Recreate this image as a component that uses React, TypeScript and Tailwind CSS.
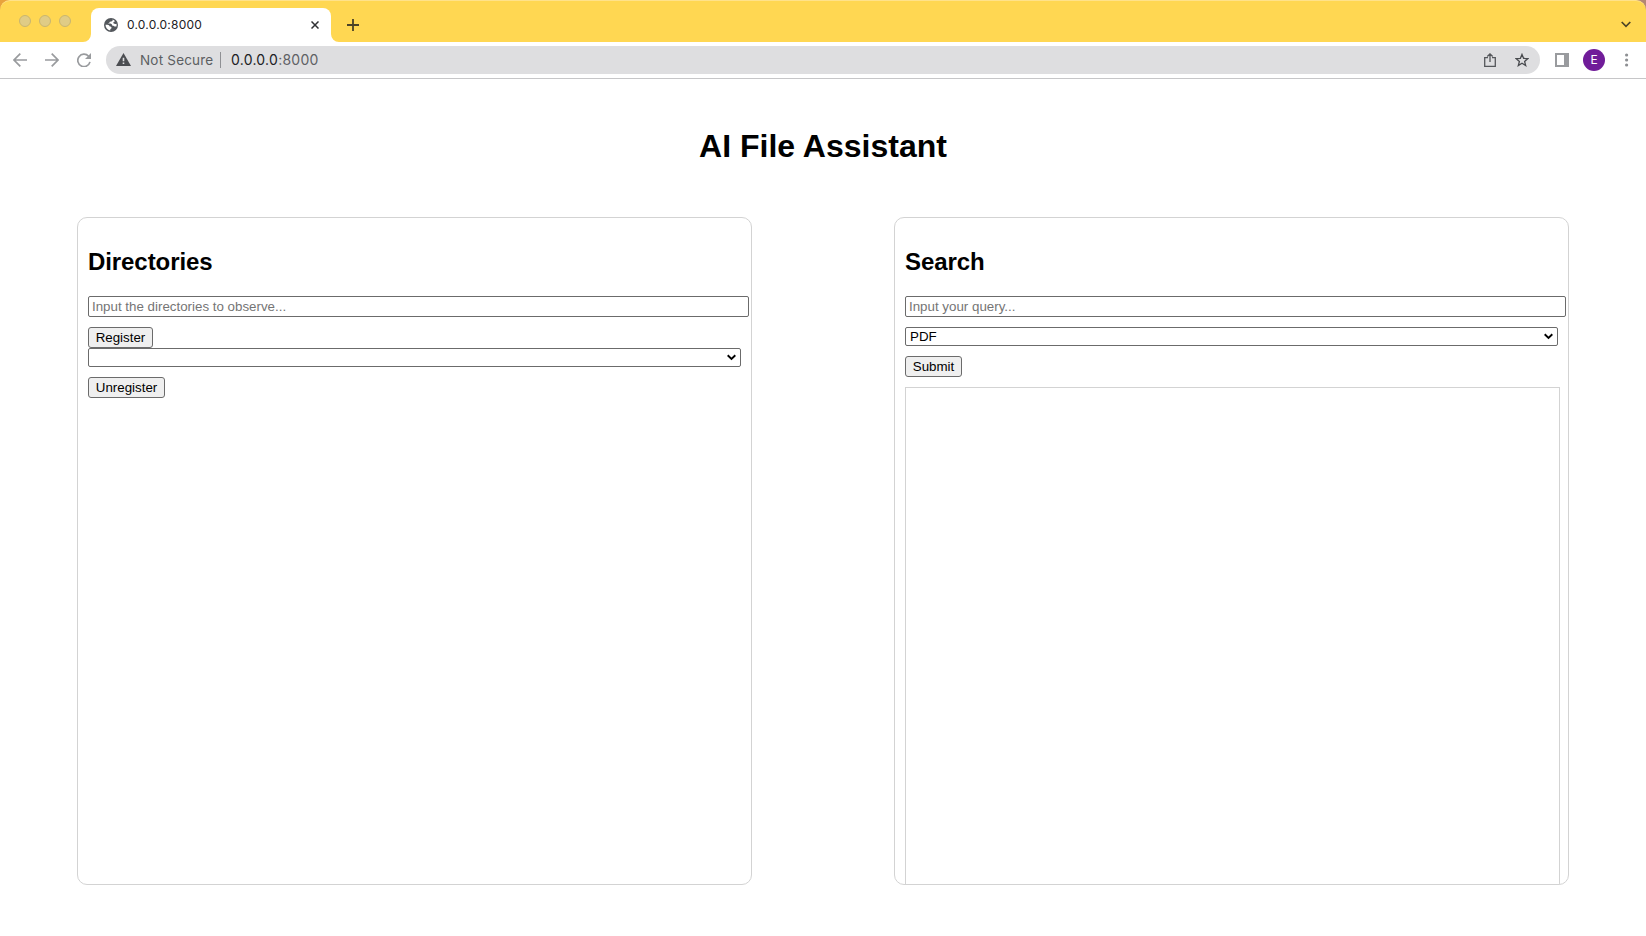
import React from "react";

const field = "h-[21px] w-[661px] shrink-0 rounded-[2px] border border-[#6b6b6b] bg-white px-[3px] text-[13.333px] leading-[15px] text-black outline-none placeholder:text-[#757575]";
const button = "flex h-[21px] shrink-0 items-center justify-center rounded-[3px] border border-[#6b6b6b] bg-[#efefef] text-[13.333px] leading-[15px] text-black";

function Dropdown({ label }: { label: string }) {
  return (
    <button className="flex h-[19px] w-full shrink-0 items-center justify-between rounded-[2px] border border-[#6b6b6b] bg-white pl-1 pr-1 text-[13.333px] leading-[15px] text-black">
      <span>{label}</span>
      <svg className="h-[7px] w-[9px]" viewBox="0 0 9 7" fill="none" stroke="#000" strokeWidth="1.9">
        <path d="M.7 1.3 4.5 5 8.3 1.3" />
      </svg>
    </button>
  );
}

function TabStrip() {
  return (
    <div className="flex h-[42px] bg-linear-to-r from-[#e8a33c] from-50% to-[#b38773] to-50%">
      <div className="flex w-full items-start rounded-t-[10px] border-t border-[#ffe28a] bg-[#ffd752]">
        <div className="flex w-[83px] gap-2 pl-[19px] pt-[14px]">
          <span className="size-3 rounded-full border border-[#c9b66f] bg-[#e0cc86]" />
          <span className="size-3 rounded-full border border-[#c9b66f] bg-[#e0cc86]" />
          <span className="size-3 rounded-full border border-[#c9b66f] bg-[#e0cc86]" />
        </div>
        <div className="mt-[7px] flex h-[34px] items-end">
          <svg className="size-2" viewBox="0 0 8 8" fill="#fff"><path d="M8 0v8H0a8 8 0 0 0 8-8Z" /></svg>
          <div className="flex h-full w-60 items-center rounded-t-lg bg-white pl-[13px] pr-3">
            <svg className="size-[14px]" viewBox="0 0 14 14">
              <circle cx="7" cy="7" r="7" fill="#53575c" />
              <path d="M8.600 1.500c.2 1.100-.3 1.900-1.300 2.100l-1.500.2c-.2.900-.6 1.300-1.400 1.500l-.8.300c1.700 0 3.100-.1 3.900.500.700.600.400 1.600 1.300 1.600.800 0 1.400.1 1.600.800l2 .1c.3-1 .3-2 .1-2.900-.9.500-2 .500-2.700-.100-.600-.500-.6-1.100-.2-1.600.500-.5 1-.4 1.500-.8-.6-.8-1.500-1.400-2.500-1.700ZM1.500 6.700c0 2.900 1.900 5.200 4.700 5.800l.2-1.500c.9-.2 1.200-.7 1.100-1.400-.1-.8-.8-.9-1.700-1l-.8-1.300C4.200 6.700 2.700 6.700 1.500 6.700Z" fill="#fff" />
            </svg>
            <span className="ml-[9px] font-[Inter,sans-serif] text-[12px] leading-4 tracking-[0.22px] text-[#202124]">0.0.0.0:8000</span>
            <svg className="ml-auto size-2" viewBox="0 0 8 8" stroke="#303134" strokeWidth="1.500"><path d="m.5.5 7 7M7.500.5l-7 7" /></svg>
          </div>
          <svg className="size-2" viewBox="0 0 8 8" fill="#fff"><path d="M0 0v8h8a8 8 0 0 1-8-8Z" /></svg>
        </div>
        <svg className="ml-2 mt-[18px] size-3" viewBox="0 0 12 12" stroke="#4b4327" strokeWidth="1.800"><path d="M6 0v12M0 6h12" /></svg>
        <svg className="ml-auto mr-[15px] mt-5 h-[7px] w-[10px]" viewBox="0 0 10 7" fill="none" stroke="#4b4327" strokeWidth="1.700"><path d="m.7 1 4.300 4.300L9.300 1" /></svg>
      </div>
    </div>
  );
}

function Toolbar() {
  return (
    <div className="flex h-[37px] items-center border-b border-[#c6c6c8] bg-white pl-[13px] font-[Inter,sans-serif]">
      <svg className="h-[14px] w-[14px]" viewBox="0 0 14 14" fill="none" stroke="#999b9e" strokeWidth="1.700"><path d="M14 7H1.300M7.300.7 1 7l6.300 6.300" /></svg>
      <svg className="ml-[18px] h-[14px] w-[14px]" viewBox="0 0 14 14" fill="none" stroke="#999b9e" strokeWidth="1.700"><path d="M0 7h12.700M6.700.7 13 7l-6.300 6.300" /></svg>
      <svg className="ml-[18px] size-[14px]" viewBox="0 0 14 14">
        <path d="M11.600 3.200A6.200 6.200 0 1 0 13 8.900" fill="none" stroke="#999b9e" strokeWidth="1.700" />
        <path d="M14 0v6H8l2.300-2.300Z" fill="#999b9e" />
      </svg>
      <div className="ml-[15px] flex h-7 w-[1434px] items-center rounded-full bg-[#dedee0] pl-[10px] pr-[11px]">
        <svg className="mb-px h-[13px] w-[15px]" viewBox="0 0 15 13"><path d="M7.500 0 15 13H0Z" fill="#4b4d51" /><path d="M6.700 4.800h1.600v3.500H6.700Zm0 4.700h1.600V11H6.700Z" fill="#dedee0" /></svg>
        <span className="ml-[9px] w-[80px] whitespace-nowrap text-[13.5px] leading-5 tracking-[0.2px] text-[#5c5e62]">Not Secure</span>
        <span className="h-4 w-px bg-[#8f9094]" />
        <span className="ml-[10px] text-[14px] leading-5 tracking-[0.26px] text-[#5f6165]"><span className="text-[#202124]">0.0.0.0</span>:8000</span>
        <svg className="ml-auto h-[14px] w-[12px]" viewBox="0 0 12 14" fill="none" stroke="#55575b" strokeWidth="1.300"><path d="M4 4.700H.7v8.600h10.600V4.700H8M6 9V1M3.300 3.500 6 .9l2.700 2.600" /></svg>
        <svg className="ml-[19px] h-[14px] w-[14px]" viewBox="0 0 14 14" fill="none" stroke="#494b4f" strokeWidth="1.300"><path d="m7 1.400 1.600 3.900 4.300.3-3.300 2.800 1.100 4.200L7 10.300l-3.700 2.300 1.100-4.200L1.100 5.600l4.300-.3Z" /></svg>
      </div>
      <svg className="ml-[15px] size-[14px]" viewBox="0 0 14 14"><path d="M1 1h12v12H1Z" fill="none" stroke="#999b9e" strokeWidth="2" /><path d="M9 1h5v12H9Z" fill="#999b9e" /></svg>
      <span className="ml-[14px] flex size-[22px] items-center justify-center rounded-full bg-[#701c99] text-[12px] text-white">E</span>
      <svg className="ml-5 h-[14px] w-1" viewBox="0 0 4 14" fill="#8e9093"><circle cx="1.600" cy="2" r="1.600" /><circle cx="1.600" cy="7" r="1.600" /><circle cx="1.600" cy="12" r="1.600" /></svg>
    </div>
  );
}

export default function App() {
  return (
    <div className="flex h-[936px] w-[1646px] flex-col overflow-hidden bg-white font-['Liberation_Sans',Arial,sans-serif] text-black">
      <TabStrip />
      <Toolbar />
      <main className="flex flex-col">
        <h1 className="mt-[49px] text-center text-[32px] font-bold leading-[37px]">AI File Assistant</h1>
        <div className="mt-[52px] flex justify-between pl-[77px] pr-[77px]">
          <section className="flex h-[668px] w-[675px] flex-col items-start rounded-[10px] border border-[#d3d3d3] p-[10px]">
            <h2 className="mt-5 text-[24px] font-bold leading-7 tracking-[-0.08px]">Directories</h2>
            <input className={field + " mt-5"} placeholder="Input the directories to observe..." />
            <button className={button + " mt-[10px] w-[65px]"}>Register</button>
            <Dropdown label="" />
            <button className={button + " mt-[10px] w-[77px]"}>Unregister</button>
          </section>
          <section className="flex h-[668px] w-[675px] flex-col items-start overflow-hidden rounded-[10px] border border-[#d3d3d3] px-[10px] pt-[10px]">
            <h2 className="mt-5 text-[24px] font-bold leading-7 tracking-[-0.08px]">Search</h2>
            <input className={field + " mb-[10px] mt-5"} placeholder="Input your query..." />
            <Dropdown label="PDF" />
            <button className={button + " mt-[10px] w-[57px]"}>Submit</button>
            <div className="mt-[10px] w-[655px] grow border border-b-0 border-[#d3d3d3]" />
          </section>
        </div>
      </main>
    </div>
  );
}
